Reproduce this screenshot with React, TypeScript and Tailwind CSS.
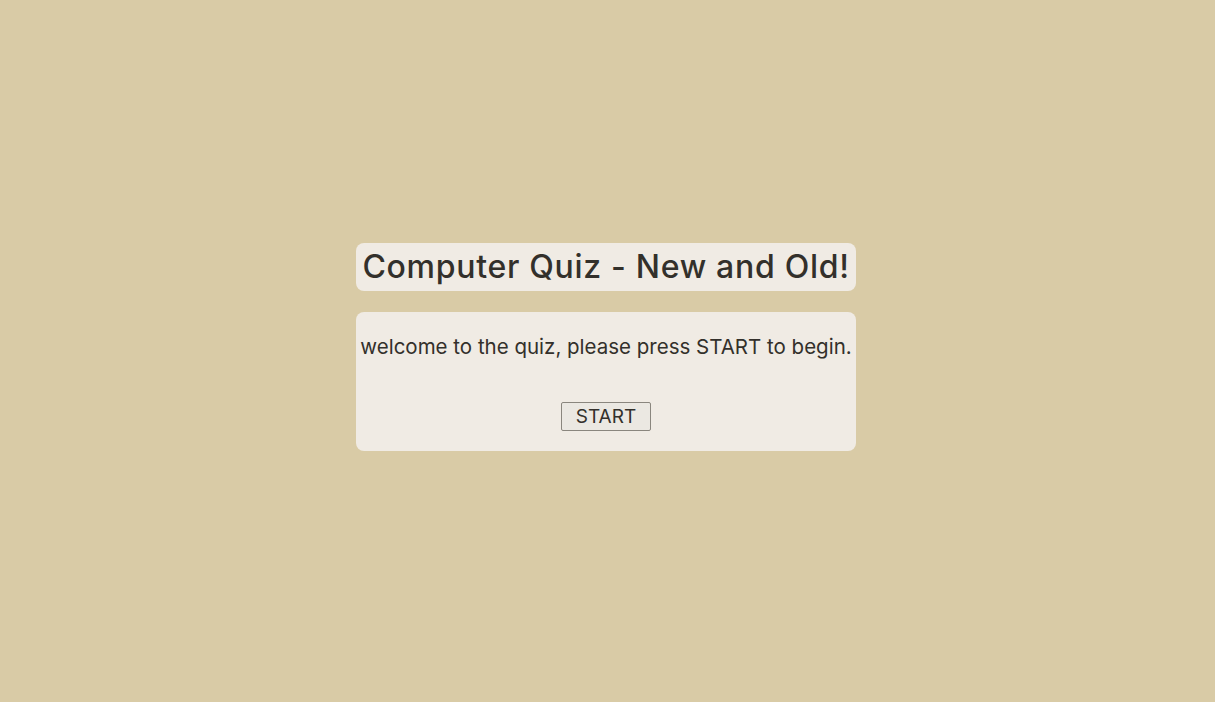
const App = () => {
	return (
		<div
			className="min-h-screen flex items-center justify-center bg-[#d9cba6] pb-[8px] pr-[3px]"
			style={{ fontFamily: 'Inter, "Noto Sans", sans-serif' }}
		>
			<div className="w-[500px] flex flex-col gap-[21px] text-[#33302b]">
				{/* Title */}
				<div className="h-[48px] rounded-lg bg-[#f0ebe4] flex items-center justify-center">
					<h1 className="text-[32px] font-medium tracking-[0.7px] leading-none whitespace-nowrap">
						Computer Quiz - New and Old!
					</h1>
				</div>

				{/* Intro card */}
				<div className="h-[139px] rounded-lg bg-[#f0ebe4] flex flex-col items-center pt-[22px]">
					<p className="text-[20.5px] leading-[26px] tracking-[0px] whitespace-nowrap">
						welcome to the quiz, please press START to begin.
					</p>
					<button className="mt-[42px] w-[90px] h-[29px] border border-[#8a867e] rounded-[2px] bg-[#ebe8e2] text-[19px] leading-none text-[#33302b]">
						START
					</button>
				</div>
			</div>
		</div>
	)
}

export default App;
